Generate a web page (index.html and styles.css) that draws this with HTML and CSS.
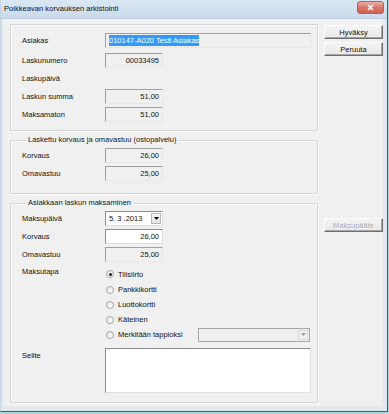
FILE: index.html
```html
<!DOCTYPE html>
<html lang="fi">
<head>
<meta charset="utf-8">
<title>Poikkeavan korvauksen arkistointi</title>
<link rel="stylesheet" href="styles.css">
</head>
<body>
<div class="window">
  <div class="titlebar">
    <span class="title">Poikkeavan korvauksen arkistointi</span>
    <span class="close"><svg width="9" height="7" viewBox="0 0 9 7"><path d="M2 1 L7 6 M7 1 L2 6" stroke="#fff" stroke-width="1.6" fill="none"/></svg></span>
  </div>
  <div class="client">
    <div class="main">
      <div class="group g1">
        <div class="row r-first"><span class="lbl">Asiakas</span><div class="field wide"><span class="sel">010147-A020 Testi Asiakas</span></div></div>
        <div class="row"><span class="lbl">Laskunumero</span><div class="field num">00033495</div></div>
        <div class="row"><span class="lbl">Laskupäivä</span></div>
        <div class="row"><span class="lbl">Laskun summa</span><div class="field num">51,00</div></div>
        <div class="row"><span class="lbl">Maksamaton</span><div class="field num">51,00</div></div>
      </div>
      <fieldset class="group g2">
        <legend>Laskettu korvaus ja omavastuu (ostopalvelu)</legend>
        <div class="row"><span class="lbl">Korvaus</span><div class="field num">26,00</div></div>
        <div class="row"><span class="lbl">Omavastuu</span><div class="field num">25,00</div></div>
      </fieldset>
      <fieldset class="group g3">
        <legend>Asiakkaan laskun maksaminen</legend>
        <div class="row"><span class="lbl">Maksupäivä</span><div class="field date"><span class="dtext">5. 3 .2013</span><span class="dbtn"><svg width="5" height="3" viewBox="0 0 5 3"><path d="M0 0 H5 L2.5 3 Z" fill="#000"/></svg></span></div></div>
        <div class="row"><span class="lbl">Korvaus</span><div class="field num white">26,00</div></div>
        <div class="row"><span class="lbl">Omavastuu</span><div class="field num">25,00</div></div>
        <div class="pay">
          <span class="lbl paylbl">Maksutapa</span>
          <div class="radios">
            <div class="radio"><span class="dot on"></span>Tilisiirto</div>
            <div class="radio"><span class="dot"></span>Pankkikortti</div>
            <div class="radio"><span class="dot"></span>Luottokortti</div>
            <div class="radio"><span class="dot"></span>Käteinen</div>
            <div class="radio last"><span class="dot"></span><span class="rtext">Merkitään tappioksi</span><div class="combo"><span class="cbtn"><svg width="5" height="3" viewBox="0 0 5 3"><path d="M0 0 H5 L2.5 3 Z" fill="#a0a0a0"/></svg></span></div></div>
          </div>
        </div>
        <div class="row memo"><span class="lbl">Selite</span><div class="textarea"></div></div>
      </fieldset>
    </div>
    <div class="buttons">
      <div class="btn">Hyväksy</div>
      <div class="btn">Peruuta</div>
      <div class="btn disabled maksu">Maksupääte</div>
    </div>
  </div>
</div>
</body>
</html>
```

FILE: styles.css
```css
* { box-sizing: border-box; }
html, body { margin: 0; padding: 0; }
body {
  width: 389px;
  height: 414px;
  background: #a8d8dc;
  font-family: "Liberation Sans", Arial, sans-serif;
  font-size: 7.5px;
  color: #111;
  overflow: hidden;
}
.window {
  width: 388px;
  height: 412px;
  background: #f0f0f0;
  border-right: 1px solid #2d6470;
  border-bottom: 1px solid #2d6470;
  border-left: 1px solid #c6d3e0;
  display: flex;
  flex-direction: column;
}
.titlebar {
  height: 19px;
  flex: none;
  display: flex;
  align-items: center;
  justify-content: space-between;
  padding: 0 3px 0 3px;
  background: linear-gradient(#dbe7f3, #cbdbec);
  border-bottom: 1px solid #c0cfdf;
}
.title { font-size: 7.6px; margin-top: -1px; }
.close {
  width: 27px;
  height: 13px;
  margin-top: -3px;
  border: 1px solid #a9645c;
  border-radius: 3px;
  background: linear-gradient(#eab0a6, #d8766a 50%, #cf5f50);
  display: flex;
  align-items: center;
  justify-content: center;
}
.client {
  flex: 1;
  display: flex;
  padding: 5px 0 0 7px;
  border-left: 2px solid #dde6ef;
  border-bottom: 5px solid #e2e8ee;
  border-right: 4px solid #e2e8ee;
}
.main { width: 308px; flex: none; display: flex; flex-direction: column; }
.group {
  margin: 0;
  border: 1px solid #d5d5d5;
  box-shadow: inset 1px 1px 0 #fff, 1px 1px 0 #fff;
  padding: 8px 0 7px 11px;
}
fieldset.group { padding-top: 3px; min-width: 0; }
legend {
  padding: 0 2px;
  margin-left: 4px;
  line-height: 10px;
  height: 10px;
}
.g1 { height: 107px; }
.g2 { margin-top: 4px; height: 59px; }
.g3 { margin-top: 4px; height: 205px; }
.row { display: flex; align-items: center; height: 15px; margin-bottom: 3px; }
.row.r-first { margin-bottom: 5px; }
.lbl { width: 83px; flex: none; }
.field {
  width: 58px;
  height: 15px;
  border: 1px solid;
  border-color: #a0a0a0 #e8e8e8 #e8e8e8 #a0a0a0;
  background: #f0f0f0;
  display: flex;
  align-items: center;
}
.field.num { justify-content: flex-end; padding-right: 3px; }
.field.white { background: #fff; border-color: #8f8f8f #e0e0e0 #e0e0e0 #8f8f8f; }
.field.wide { width: 206px; padding-left: 3px; }
.sel { background: #3399ff; color: #fff; padding: 1px 0; line-height: 9px; }
.field.date {
  background: #fff;
  border-color: #8f8f8f #e0e0e0 #e0e0e0 #8f8f8f;
  justify-content: space-between;
  padding: 1px 1px 1px 3px;
}
.dbtn {
  width: 10px;
  height: 11px;
  background: linear-gradient(#f6f6f6, #e4e4e4);
  border: 1px solid #b8b8b8;
  display: flex;
  align-items: center;
  justify-content: center;
}
.pay { display: flex; margin-top: 4px; }
.paylbl { padding-top: 1px; }
.radios { display: flex; flex-direction: column; }
.radio { display: flex; align-items: center; height: 15px; }
.radio:first-child { height: 16px; }
.dot {
  width: 8px;
  height: 8px;
  border-radius: 50%;
  border: 1px solid #a4a4a4;
  background: linear-gradient(135deg, #e6e6e6, #fff);
  margin: 0 4px 0 1px;
  display: flex;
  align-items: center;
  justify-content: center;
}
.dot.on::after {
  content: "";
  width: 3px;
  height: 3px;
  border-radius: 50%;
  background: #1a1a1a;
}
.rtext { width: 80px; }
.combo {
  width: 112px;
  height: 14px;
  border: 1px solid #a8a8a8;
  background: #f0f0f0;
  display: flex;
  justify-content: flex-end;
  align-items: center;
  padding-right: 1px;
}
.cbtn {
  width: 10px;
  height: 10px;
  border: 1px solid #d8d8d8;
  display: flex;
  align-items: center;
  justify-content: center;
}
.row.memo { align-items: flex-start; height: auto; margin-top: 6px; }
.row.memo .lbl { padding-top: 3px; }
.textarea {
  width: 206px;
  height: 45px;
  background: #fff;
  border: 1px solid;
  border-color: #8f8f8f #e0e0e0 #e0e0e0 #8f8f8f;
}
.buttons { display: flex; flex-direction: column; margin-left: 6px; padding-top: 1px; }
.btn {
  width: 59px;
  height: 14px;
  display: flex;
  align-items: center;
  justify-content: center;
  background: linear-gradient(#f4f4f4, #e8e8e8);
  border: 1px solid;
  border-color: #fff #6e6e6e #6e6e6e #fff;
  box-shadow: inset -1px -1px 0 #a8a8a8;
  margin-bottom: 3px;
}
.btn.maksu { margin-top: 159px; }
.btn.disabled { color: #a8a8a8; text-shadow: 1px 1px 0 #fff; }
```
